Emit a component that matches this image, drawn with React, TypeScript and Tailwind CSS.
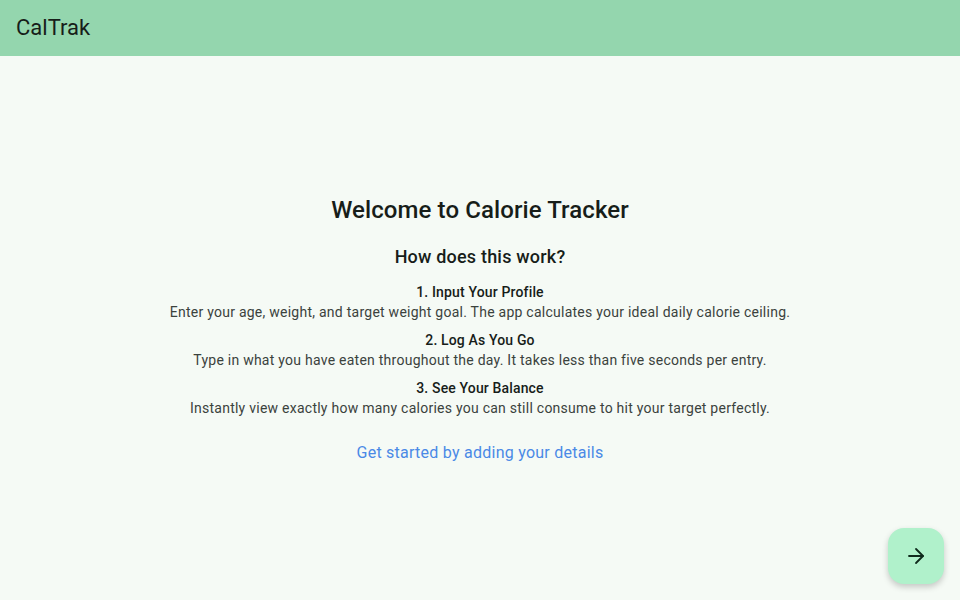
import { FiArrowRight } from 'react-icons/fi';

const steps = [
  {
    title: '1. Input Your Profile',
    text: 'Enter your age, weight, and target weight goal. The app calculates your ideal daily calorie ceiling.',
  },
  {
    title: '2. Log As You Go',
    text: 'Type in what you have eaten throughout the day. It takes less than five seconds per entry.',
  },
  {
    title: '3. See Your Balance',
    text: 'Instantly view exactly how many calories you can still consume to hit your target perfectly.',
  },
];

export default function App() {
  return (
    <div className="flex flex-col h-[600px] w-full bg-[#f5faf5] font-['Roboto',sans-serif] text-[#171d19] overflow-hidden">
      <header className="h-14 shrink-0 bg-[#94d6ae] flex items-center px-4">
        <h1 className="text-[22px] leading-7 text-[#171d19]">CalTrak</h1>
      </header>

      <main className="flex-1 flex flex-col relative">
        <div className="flex-1 flex flex-col items-center justify-center text-center pt-[3px]">
          <h2 className="text-[24px] leading-8 font-medium tracking-[0.1px]">Welcome to Calorie Tracker</h2>
          <h3 className="mt-[19px] text-[18px] leading-6 font-medium tracking-[0.2px]">How does this work?</h3>
          <div className="mt-[13px] flex flex-col gap-2">
            {steps.map((s) => (
              <div key={s.title} className="flex flex-col">
                <span className="text-[14px] leading-5 font-medium tracking-[0.15px]">{s.title}</span>
                <span className="text-[14px] leading-5 tracking-[0.25px] text-[#3b423d]">{s.text}</span>
              </div>
            ))}
          </div>
          <a className="mt-[23px] text-[16px] leading-6 tracking-[0.25px] text-[#4a89e6] cursor-pointer">
            Get started by adding your details
          </a>
        </div>

        <button className="absolute right-4 bottom-4 w-14 h-14 rounded-2xl bg-[#b0f1cb] flex items-center justify-center shadow-[0_3px_6px_rgba(0,0,0,0.2)] text-[#0f2a1c]">
          <FiArrowRight className="w-6 h-6" strokeWidth={1.8} />
        </button>
      </main>
    </div>
  );
}
